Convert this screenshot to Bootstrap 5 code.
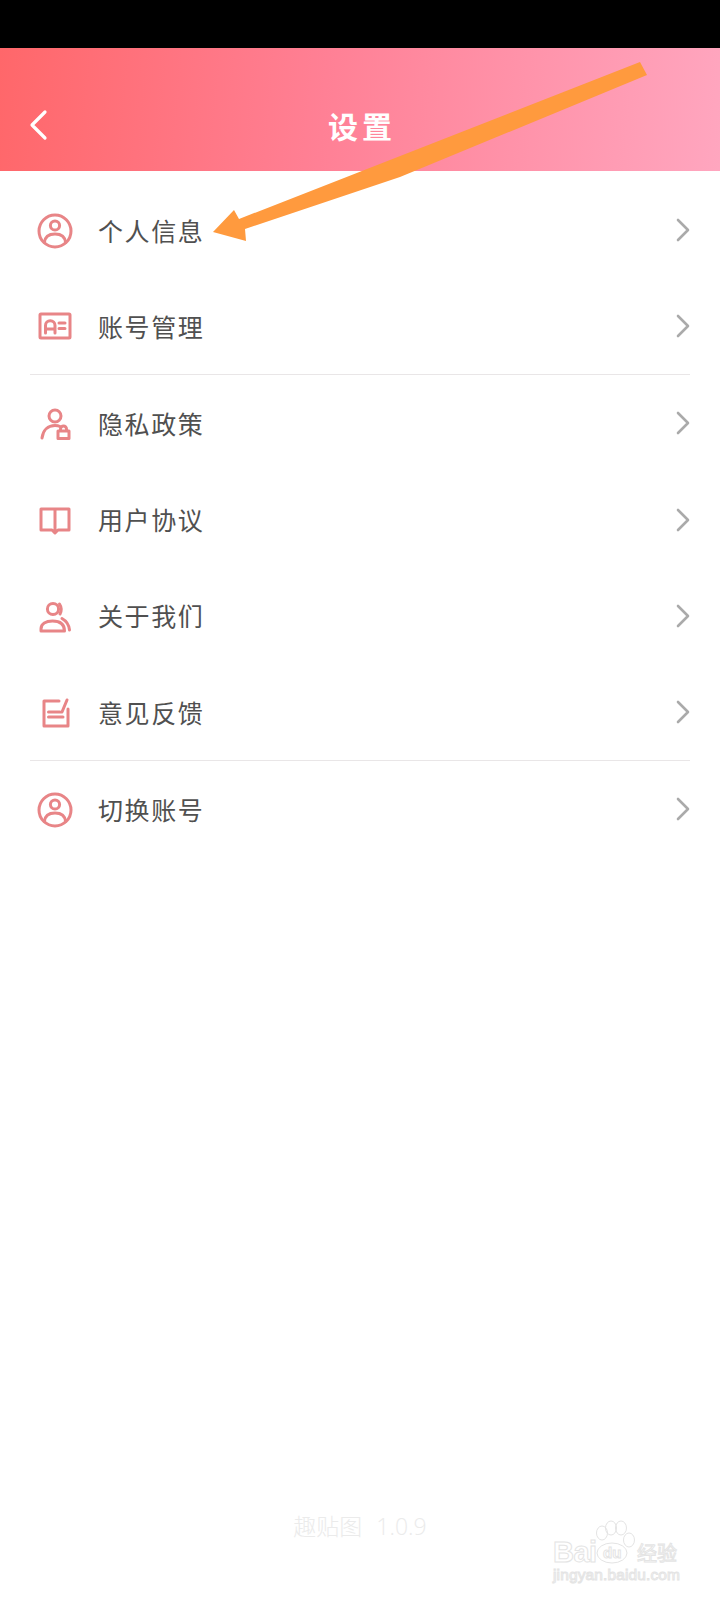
<!DOCTYPE html>
<html lang="zh">
<head>
<meta charset="utf-8">
<title>设置</title>
<link href="https://cdn.jsdelivr.net/npm/bootstrap@5.3.0/dist/css/bootstrap.min.css" rel="stylesheet">
<style>
body{font-family:"Noto Sans CJK SC","Liberation Sans",sans-serif;background:#fff;}
.screen{width:720px;height:1600px;position:relative;overflow:hidden;}
.status-strip{height:48px;background:#000;flex:none;}
.top-head{height:123px;flex:none;background:linear-gradient(95deg,#ff676a 0%,#ff8095 45%,#ffa6bf 100%);padding:30px 0 0 0;position:relative;}
.head-title{font-size:30px;line-height:1;letter-spacing:4px;color:#fff;font-weight:700;margin-right:-4px;}
.back-link{position:absolute;left:22px;bottom:29px;display:block;}
.set-list{padding-top:11px;}
.set-row{height:96.2px;padding:0 30px 0 35px;gap:23px;border:0;background:transparent;color:#505050;font-size:25px;letter-spacing:1.6px;line-height:1;border-radius:0;}
.set-row svg.ico{flex:none;fill:none;stroke:#e88587;stroke-width:3;stroke-linecap:round;stroke-linejoin:round;}
.set-row svg.chev{flex:none;fill:none;stroke:#aaa;stroke-width:2.6;stroke-linecap:round;stroke-linejoin:round;}
.rule-line{height:1px;margin:0 30px;background:#e9e6e7;}
.app-ver{color:#ebebeb;font-size:23px;line-height:1;margin-bottom:62px;font-weight:300;}
.app-ver .num{font-family:"Open Sans","Liberation Sans",sans-serif;font-weight:300;margin-left:14px;}
.overlay-arrow{position:absolute;left:0;top:0;pointer-events:none;}
.brand-mark{position:absolute;left:545px;top:1510px;pointer-events:none;}
</style>
</head>
<body class="m-0">
<div class="screen d-flex flex-column">
  <div class="status-strip"></div>
  <header class="top-head d-flex align-items-center justify-content-center">
    <a class="back-link" href="#" aria-label="返回">
      <svg width="28" height="34" viewBox="0 0 28 34" fill="none" stroke="#fff" stroke-width="3.2" stroke-linecap="round" stroke-linejoin="round"><path d="M23 4 L10 17 L23 30"/></svg>
    </a>
    <div class="head-title">设置</div>
  </header>

  <div class="set-list list-group list-group-flush">
    <a href="#" class="set-row list-group-item d-flex align-items-center">
      <svg class="ico" width="40" height="40" viewBox="0 0 40 40"><circle cx="20" cy="21" r="16"/><circle cx="20" cy="15.5" r="4.6"/><path d="M9.5 32.5 C10 26 15 24 20 24 C25 24 30 26 30.5 32.5"/></svg>
      <span class="flex-grow-1">个人信息</span>
      <svg class="chev" width="14" height="24" viewBox="0 0 14 24"><path d="M2 2 L12 12 L2 22"/></svg>
    </a>
    <a href="#" class="set-row list-group-item d-flex align-items-center">
      <svg class="ico" width="40" height="40" viewBox="0 0 40 40"><rect x="5" y="8" width="30" height="24" rx="1"/><path d="M10.5 27 V19.5 A4.7 4.7 0 0 1 20 19.5 V27 M10.5 23 H20 M24 17 H30 M24 22.5 H30"/></svg>
      <span class="flex-grow-1">账号管理</span>
      <svg class="chev" width="14" height="24" viewBox="0 0 14 24"><path d="M2 2 L12 12 L2 22"/></svg>
    </a>
    <div class="rule-line"></div>
    <a href="#" class="set-row list-group-item d-flex align-items-center">
      <svg class="ico" width="40" height="40" viewBox="0 0 40 40"><circle cx="20" cy="13" r="6"/><path d="M7 35 C8 27 13 22.5 20 22.5 C22 22.5 24 23 25 23.5"/><rect x="23" y="28" width="11" height="7.5" fill="#fff"/><path d="M25.5 27.5 V26 A3 3 0 0 1 31.5 26 V27.5"/></svg>
      <span class="flex-grow-1">隐私政策</span>
      <svg class="chev" width="14" height="24" viewBox="0 0 14 24"><path d="M2 2 L12 12 L2 22"/></svg>
    </a>
    <a href="#" class="set-row list-group-item d-flex align-items-center">
      <svg class="ico" width="40" height="40" viewBox="0 0 40 40"><path d="M20 9 V31 M20 9 H6 V30 H17 L20 33 L23 30 H34 V9 H20"/></svg>
      <span class="flex-grow-1">用户协议</span>
      <svg class="chev" width="14" height="24" viewBox="0 0 14 24"><path d="M2 2 L12 12 L2 22"/></svg>
    </a>
    <a href="#" class="set-row list-group-item d-flex align-items-center">
      <svg class="ico" width="40" height="40" viewBox="0 0 40 40"><circle cx="18" cy="13" r="5.6"/><path d="M6 35 V33 C6 27.5 11 25 17.5 25 C24 25 29.5 27.5 29.5 35 Z"/><path d="M24.5 8 C26.5 11 26.5 15 25 18 M27 22.5 C31.5 25 34 29 34.5 34"/></svg>
      <span class="flex-grow-1">关于我们</span>
      <svg class="chev" width="14" height="24" viewBox="0 0 14 24"><path d="M2 2 L12 12 L2 22"/></svg>
    </a>
    <a href="#" class="set-row list-group-item d-flex align-items-center">
      <svg class="ico" width="40" height="40" viewBox="0 0 40 40"><path d="M24 9 H9 V34 H33 V17 M32 8 L27 20 M13.5 20 H25 M13.5 25 H28"/></svg>
      <span class="flex-grow-1">意见反馈</span>
      <svg class="chev" width="14" height="24" viewBox="0 0 14 24"><path d="M2 2 L12 12 L2 22"/></svg>
    </a>
    <div class="rule-line"></div>
    <a href="#" class="set-row list-group-item d-flex align-items-center">
      <svg class="ico" width="40" height="40" viewBox="0 0 40 40"><circle cx="20" cy="21" r="16"/><circle cx="20" cy="15.5" r="4.6"/><path d="M9.5 32.5 C10 26 15 24 20 24 C25 24 30 26 30.5 32.5"/></svg>
      <span class="flex-grow-1">切换账号</span>
      <svg class="chev" width="14" height="24" viewBox="0 0 14 24"><path d="M2 2 L12 12 L2 22"/></svg>
    </a>
  </div>

  <div class="app-ver mt-auto text-center">趣贴图<span class="num">1.0.9</span></div>

  <svg class="overlay-arrow" width="720" height="300" viewBox="0 0 720 300">
    <polygon fill="#ff9a3e" points="213,232 234,210 239,219 640,62 647,75 400,177 245,229 246,241"/>
  </svg>

  <svg class="brand-mark" width="150" height="80" viewBox="0 0 150 80" fill="none" stroke="#e4e4e4" stroke-width="1">
    <ellipse cx="57" cy="23" rx="5.5" ry="7"/><ellipse cx="66" cy="18" rx="5.5" ry="7"/><ellipse cx="76" cy="18" rx="5.5" ry="7"/><ellipse cx="84" cy="30" rx="5.5" ry="7"/>
    <ellipse cx="67" cy="43" rx="15" ry="10"/>
    <text x="8" y="52" font-family="Liberation Sans" font-size="29" font-weight="700" fill="#fff" textLength="44">Bai</text>
    <text x="58" y="48" font-family="Liberation Sans" font-size="15" font-weight="700" fill="#fff">du</text>
    <text x="92" y="51" font-family="Noto Sans CJK SC" font-size="20" fill="#fff">经验</text>
    <text x="8" y="70" font-family="Liberation Sans" font-size="15.5" fill="#fff" textLength="127">jingyan.baidu.com</text>
  </svg>
</div>
</body>
</html>
